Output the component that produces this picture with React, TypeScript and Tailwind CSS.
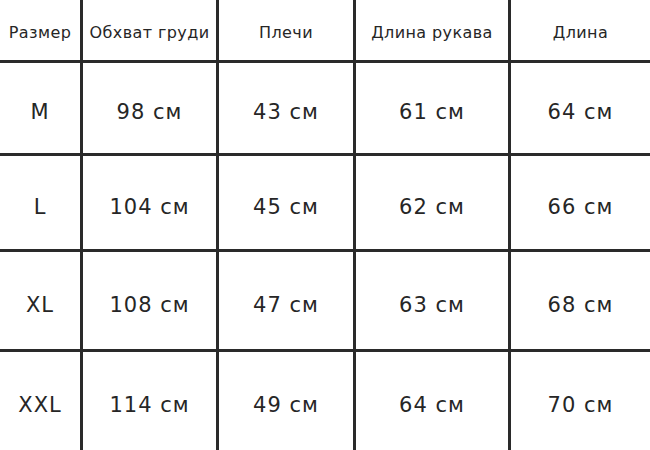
const headers = ["Размер", "Обхват груди", "Плечи", "Длина рукава", "Длина"];

const rows = [
  ["M", "98 см", "43 см", "61 см", "64 см"],
  ["L", "104 см", "45 см", "62 см", "66 см"],
  ["XL", "108 см", "47 см", "63 см", "68 см"],
  ["XXL", "114 см", "49 см", "64 см", "70 см"],
];

export default function App() {
  return (
    <div className="h-[450px] w-[650px] overflow-hidden bg-white font-['DejaVu_Sans',sans-serif] text-[#262626]">
      <div className="grid h-full grid-cols-[80px_133px_134px_152px_139px] grid-rows-[60px_90px_93px_97px_98px] gap-[3px] bg-[#2a2a2a]">
        {headers.map((h) => (
          <div
            key={h}
            className="flex items-center justify-center bg-white pt-[6px] text-[16px] tracking-[0.4px] whitespace-nowrap"
          >
            {h}
          </div>
        ))}
        {rows.map((row) =>
          row.map((cell, i) => (
            <div
              key={row[0] + i}
              className="flex items-center justify-center bg-white pt-[10px] text-[21px] tracking-[1px]"
            >
              {cell}
            </div>
          )),
        )}
      </div>
    </div>
  );
}
